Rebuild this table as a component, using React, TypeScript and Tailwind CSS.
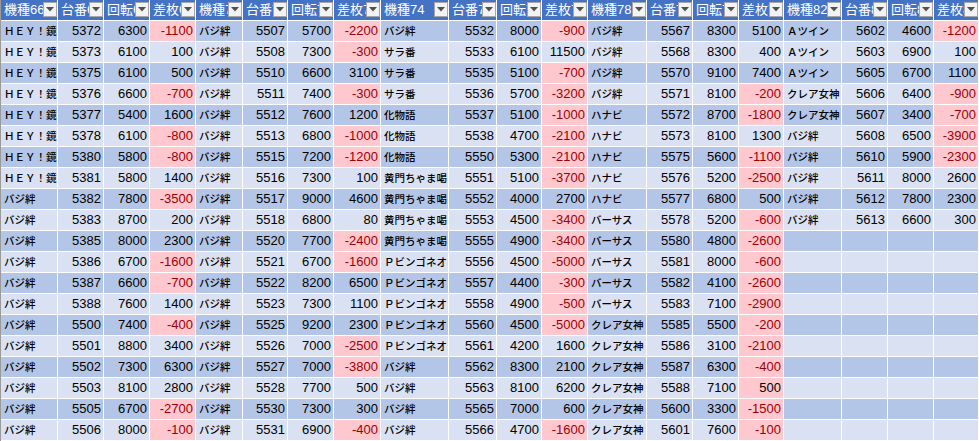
import React from "react";

type Row = [string, number, number, number, boolean?];

const HEY = "ＨＥＹ！鏡";
const BAJI = "バジ絆";
const SARA = "サラ番";
const BAKE = "化物語";
const KOMON = "黄門ちゃま喝";
const BINGO = "Ｐビンゴネオ";
const HANABI = "ハナビ";
const VS = "バーサス";
const CLAIRE = "クレア女神";
const ATWIN = "Ａツイン";

const groups: { id: string; rows: Row[] }[] = [
  {
    id: "66",
    rows: [
      [HEY, 5372, 6300, -1100],
      [HEY, 5373, 6100, 100],
      [HEY, 5375, 6100, 500],
      [HEY, 5376, 6600, -700],
      [HEY, 5377, 5400, 1600],
      [HEY, 5378, 6100, -800],
      [HEY, 5380, 5800, -800],
      [HEY, 5381, 5800, 1400],
      [BAJI, 5382, 7800, -3500],
      [BAJI, 5383, 8700, 200],
      [BAJI, 5385, 8000, 2300],
      [BAJI, 5386, 6700, -1600],
      [BAJI, 5387, 6600, -700],
      [BAJI, 5388, 7600, 1400],
      [BAJI, 5500, 7400, -400],
      [BAJI, 5501, 8800, 3400],
      [BAJI, 5502, 7300, 6300],
      [BAJI, 5503, 8100, 2800],
      [BAJI, 5505, 6700, -2700],
      [BAJI, 5506, 8000, -100],
    ],
  },
  {
    id: "70",
    rows: [
      [BAJI, 5507, 5700, -2200],
      [BAJI, 5508, 7300, -300],
      [BAJI, 5510, 6600, 3100],
      [BAJI, 5511, 7400, -300],
      [BAJI, 5512, 7600, 1200],
      [BAJI, 5513, 6800, -1000],
      [BAJI, 5515, 7200, -1200],
      [BAJI, 5516, 7300, 100],
      [BAJI, 5517, 9000, 4600],
      [BAJI, 5518, 6800, 80],
      [BAJI, 5520, 7700, -2400],
      [BAJI, 5521, 6700, -1600],
      [BAJI, 5522, 8200, 6500],
      [BAJI, 5523, 7300, 1100],
      [BAJI, 5525, 9200, 2300],
      [BAJI, 5526, 7000, -2500],
      [BAJI, 5527, 7000, -3800],
      [BAJI, 5528, 7700, 500],
      [BAJI, 5530, 7300, 300],
      [BAJI, 5531, 6900, -400],
    ],
  },
  {
    id: "74",
    rows: [
      [BAJI, 5532, 8000, -900],
      [SARA, 5533, 6100, 11500],
      [SARA, 5535, 5100, -700],
      [SARA, 5536, 5700, -3200],
      [BAKE, 5537, 5100, -1000],
      [BAKE, 5538, 4700, -2100],
      [BAKE, 5550, 5300, -2100],
      [KOMON, 5551, 5100, -3700],
      [KOMON, 5552, 4000, 2700],
      [KOMON, 5553, 4500, -3400],
      [KOMON, 5555, 4900, -3400],
      [BINGO, 5556, 4500, -5000],
      [BINGO, 5557, 4400, -300],
      [BINGO, 5558, 4900, -500],
      [BINGO, 5560, 4500, -5000],
      [BINGO, 5561, 4200, 1600],
      [BAJI, 5562, 8300, 2100],
      [BAJI, 5563, 8100, 6200],
      [BAJI, 5565, 7000, 600],
      [BAJI, 5566, 4700, -1600],
    ],
  },
  {
    id: "78",
    rows: [
      [BAJI, 5567, 8300, 5100],
      [BAJI, 5568, 8300, 400],
      [BAJI, 5570, 9100, 7400],
      [BAJI, 5571, 8100, -200],
      [HANABI, 5572, 8700, -1800],
      [HANABI, 5573, 8100, 1300],
      [HANABI, 5575, 5600, -1100],
      [HANABI, 5576, 5200, -2500],
      [HANABI, 5577, 6800, 500],
      [VS, 5578, 5200, -600],
      [VS, 5580, 4800, -2600],
      [VS, 5581, 8000, -600],
      [VS, 5582, 4100, -2600],
      [VS, 5583, 7100, -2900],
      [CLAIRE, 5585, 5500, -200],
      [CLAIRE, 5586, 3100, -2100],
      [CLAIRE, 5587, 6300, -400],
      [CLAIRE, 5588, 7100, 500, true],
      [CLAIRE, 5600, 3300, -1500],
      [CLAIRE, 5601, 7600, -100],
    ],
  },
  {
    id: "82",
    rows: [
      [ATWIN, 5602, 4600, -1200],
      [ATWIN, 5603, 6900, 100],
      [ATWIN, 5605, 6700, 1100],
      [CLAIRE, 5606, 6400, -900],
      [CLAIRE, 5607, 3400, -700],
      [BAJI, 5608, 6500, -3900],
      [BAJI, 5610, 5900, -2300],
      [BAJI, 5611, 8000, 2600],
      [BAJI, 5612, 7800, 2300],
      [BAJI, 5613, 6600, 300],
    ],
  },
];

const Header = ({ label }: { label: string }) => (
  <div className="relative h-[20px] overflow-hidden bg-[#4472c4] pl-[3px] text-[13px] leading-[20px] text-white whitespace-nowrap">
    {label}
    <div className="absolute right-0 top-[2px] flex h-[15px] w-[14px] items-center justify-center border border-[#a6a6a6] bg-[#f3f3f3]">
      <svg width="8" height="5" viewBox="0 0 8 5">
        <path d="M0 0h8L4 4.5z" fill="#505050" />
      </svg>
    </div>
  </div>
);

const App = () => {
  const cells: React.ReactNode[] = [];
  groups.forEach((g) => {
    ["機種", "台番", "回転", "差枚"].forEach((h) =>
      cells.push(<Header key={`h${g.id}${h}`} label={h + g.id} />)
    );
  });

  for (let r = 0; r < 20; r++) {
    const bg = r % 2 === 0 ? "bg-[#b4c6e7]" : "bg-[#d9e1f2]";
    groups.forEach((g) => {
      const row = g.rows[r];
      const k = `${g.id}-${r}`;
      if (!row) {
        for (let i = 0; i < 4; i++) cells.push(<div key={`${k}e${i}`} className={bg} />);
        return;
      }
      const [name, no, rot, diff, forcePink] = row;
      const pink = diff < 0 || forcePink;
      cells.push(
        <div
          key={`${k}n`}
          className={`${bg} overflow-hidden whitespace-nowrap pl-[3px] text-[10.5px] font-medium leading-[20px] text-black`}
          style={{ fontFamily: '"Noto Sans CJK JP", sans-serif' }}
        >
          {name}
        </div>
      );
      cells.push(
        <div key={`${k}a`} className={`${bg} pr-[2px] text-right text-[13px] leading-[20px] text-black`}>
          {no}
        </div>
      );
      cells.push(
        <div key={`${k}b`} className={`${bg} pr-[2px] text-right text-[13px] leading-[20px] text-black`}>
          {rot}
        </div>
      );
      cells.push(
        <div
          key={`${k}c`}
          className={`pr-[2px] text-right text-[13px] leading-[20px] ${
            pink ? "bg-[#ffc7ce] " + (diff < 0 ? "text-[#9c0006]" : "text-black") : bg + " text-black"
          }`}
        >
          {diff}
        </div>
      );
    });
  }

  return (
    <div
      className="h-[441px] w-[979px] overflow-hidden border-l border-[#9a9a9a] bg-white"
      style={{ fontFamily: '"Liberation Sans", "Noto Sans CJK JP", sans-serif' }}
    >
      <div className="grid auto-rows-[20px] grid-cols-[56px_45px_45px_45px_46px_44px_45px_46px_67px_47px_44px_45px_58px_45px_45px_44px_57px_45px_45px_44px] gap-px">
        {cells}
      </div>
    </div>
  );
};

export default App;
